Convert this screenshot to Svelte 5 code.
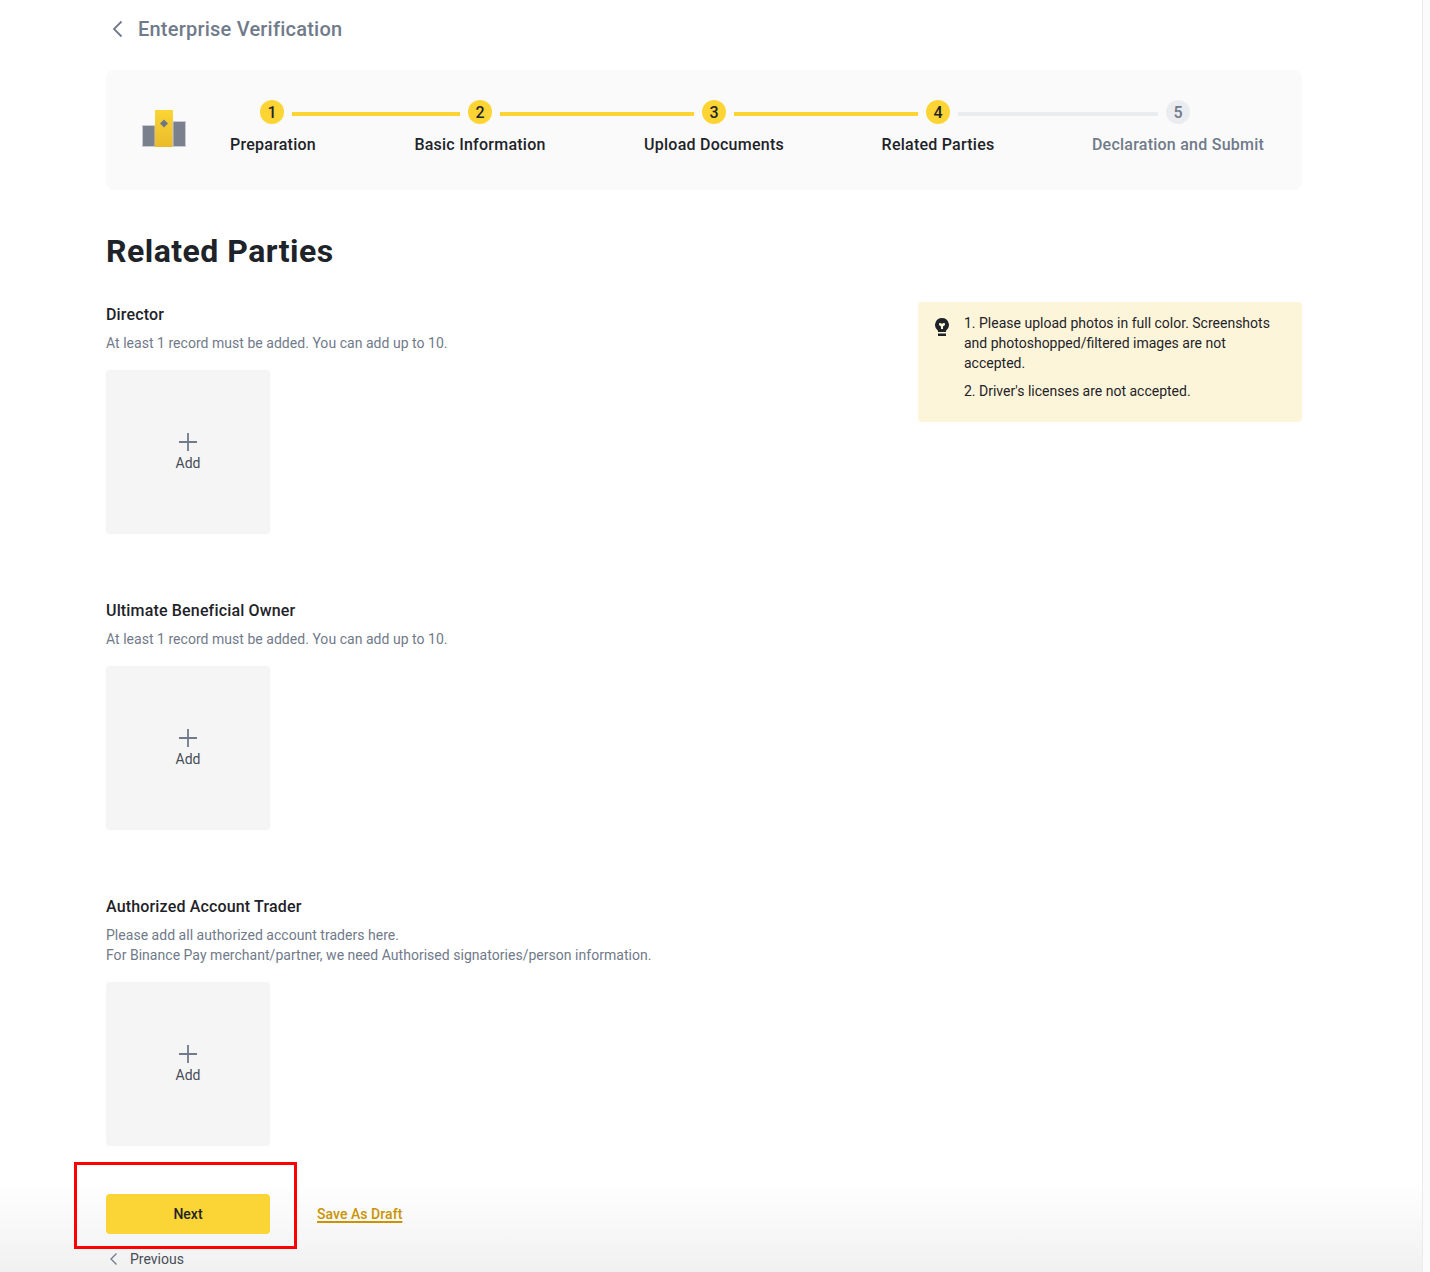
<script>
  const steps = [
    { n: 1, label: 'Preparation', line: 168, done: true },
    { n: 2, label: 'Basic Information', line: 194, done: true },
    { n: 3, label: 'Upload Documents', line: 184, done: true },
    { n: 4, label: 'Related Parties', line: 200, done: true },
    { n: 5, label: 'Declaration and Submit', line: 0, done: false }
  ];
  const sections = [
    { title: 'Director', desc: ['At least 1 record must be added. You can add up to 10.'] },
    { title: 'Ultimate Beneficial Owner', desc: ['At least 1 record must be added. You can add up to 10.'] },
    {
      title: 'Authorized Account Trader',
      desc: [
        'Please add all authorized account traders here.',
        'For Binance Pay merchant/partner, we need Authorised signatories/person information.'
      ]
    }
  ];
</script>

<div class="page">
  <div class="fade"></div>
  <main class="content">
    <header class="topbar">
      <svg class="back" width="24" height="24" viewBox="0 0 24 24" fill="none">
        <path d="M15.5 4.5 8 12l7.500 7.500" stroke="#707a8a" stroke-width="1.800" />
      </svg>
      <span>Enterprise Verification</span>
    </header>

    <section class="stepper">
      <svg class="logo" width="44" height="37" viewBox="0 0 44 37">
        <defs>
          <linearGradient id="gold" x1="0" y1="0" x2="0" y2="1">
            <stop offset="0" stop-color="#fcd535" />
            <stop offset="1" stop-color="#e9bb2a" />
          </linearGradient>
        </defs>
        <rect x="0.500" y="15.500" width="12.500" height="21" fill="#7a808e" stroke="#c9ccd2" stroke-width="1" />
        <rect x="13" y="0" width="18" height="37" fill="url(#gold)" />
        <rect x="31" y="11.500" width="12.500" height="25" fill="#7a808e" stroke="#c9ccd2" stroke-width="1" />
        <path d="M22 9.500l4 4-4 4-4-4z" fill="#6e7686" />
      </svg>
      <ol class="steps">
        {#each steps as s}
          <li class="step" class:todo={!s.done}>
            <span class="dot">{s.n}</span>
            {#if s.line}
              <span class="line" class:grey={s.n === 4} style="width:{s.line}px"></span>
            {/if}
            <span class="label">{s.label}</span>
          </li>
        {/each}
      </ol>
    </section>

    <h1>Related Parties</h1>

    <div class="columns">
      <div class="forms">
        {#each sections as sec}
          <section class="party">
            <h2>{sec.title}</h2>
            <p class="desc">
              {#each sec.desc as d}<span>{d}</span>{/each}
            </p>
            <button class="add" type="button">
              <svg width="20" height="20" viewBox="0 0 20 20" fill="none">
                <path d="M10 1v18M1 10h18" stroke="#707a8a" stroke-width="1.800" />
              </svg>
              <span class="add-text">Add</span>
            </button>
          </section>
        {/each}
      </div>

      <aside class="tip">
        <svg class="bulb" width="16" height="20" viewBox="0 0 16 20">
          <path fill-rule="evenodd" fill="#1e2329" d="M8 1a7 7 0 0 1 4 12.700V15H4v-1.300A7 7 0 0 1 8 1Zm-3 6.200c0 1.300 1.300 1.600 2 2.400V12h2V9.600c.7-.8 2-1.100 2-2.400C11 5.800 9 5.800 8 7 7 5.800 5 5.800 5 7.200Z" />
          <rect x="4" y="16.500" width="8" height="2.500" fill="#1e2329" />
        </svg>
        <div class="tip-text">
          <p>1. Please upload photos in full color. Screenshots and photoshopped/filtered images are not accepted.</p>
          <p>2. Driver's licenses are not accepted.</p>
        </div>
      </aside>
    </div>

    <div class="actions">
      <button class="next" type="button">Next</button>
      <a class="draft" href="#draft">Save As Draft</a>
    </div>
    <div class="previous">
      <svg width="16" height="16" viewBox="0 0 16 16" fill="none">
        <path d="M10.500 2.500 5 8l5.500 5.500" stroke="#707a8a" stroke-width="1.300" />
      </svg>
      <span>Previous</span>
    </div>
  </main>

  <div class="scrollbar"></div>
  <div class="annotation"></div>
</div>

<style>
  :global(body) {
    margin: 0;
    background: #fff;
  }
  .page {
    position: relative;
    height: 1272px;
    overflow: hidden;
    font-family: Roboto, "Noto Sans", "Liberation Sans", sans-serif;
    color: #1e2329;
  }
  .content {
    position: relative;
    width: 1196px;
    margin-left: 106px;
    display: flex;
    flex-direction: column;
  }
  .topbar {
    height: 58px;
    display: flex;
    align-items: center;
    gap: 8px;
    font-size: 20px;
    font-weight: 500;
    letter-spacing: 0.22px;
    color: #707a8a;
  }
  .back {
    flex: none;
  }
  .stepper {
    margin-top: 12px;
    height: 120px;
    box-sizing: border-box;
    background: #fafafa;
    border-radius: 8px;
    display: flex;
    align-items: flex-start;
    padding: 30px 0 0 36px;
  }
  .logo {
    flex: none;
    margin: 10px 43px 0 0;
  }
  .steps {
    list-style: none;
    margin: 0;
    padding: 0;
    display: grid;
    grid-template-columns: 86px 134px 138px 114px 170px;
    column-gap: 98px;
  }
  .step {
    position: relative;
    display: flex;
    flex-direction: column;
    align-items: center;
    gap: 11px;
  }
  .step:first-child .label {
    margin-left: 2px;
  }
  .dot {
    width: 24px;
    height: 24px;
    border-radius: 50%;
    background: #fcd535;
    font-size: 16px;
    font-weight: 500;
    line-height: 25px;
    text-align: center;
    color: #1e2329;
  }
  .todo .dot {
    background: #eaecef;
    color: #707a8a;
  }
  .line {
    position: absolute;
    left: calc(50% + 20px);
    top: 12px;
    height: 4px;
    background: #fcd535;
  }
  .line.grey {
    background: #eaecef;
  }
  .label {
    font-size: 16px;
    line-height: 20px;
    font-weight: 500;
    letter-spacing: 0.24px;
    white-space: nowrap;
  }
  .todo .label {
    color: #707a8a;
  }
  h1 {
    margin: 42px 0 0;
    font-size: 32px;
    line-height: 38px;
    font-weight: 700;
    letter-spacing: 0.47px;
    color: #1e2329;
  }
  .columns {
    display: flex;
    justify-content: space-between;
    align-items: flex-start;
    margin-top: 32px;
  }
  .tip {
    width: 384px;
    height: 120px;
    box-sizing: border-box;
    background: #fdf5d9;
    border-radius: 4px;
    display: flex;
    gap: 14px;
    padding: 11px 16px 0;
  }
  .bulb {
    flex: none;
    margin-top: 4px;
  }
  .tip-text {
    font-size: 14px;
    line-height: 20px;
    color: #1e2329;
  }
  .tip-text p {
    margin: 0 0 8px;
  }
  .party {
    height: 296px;
  }
  .party:last-child {
    height: 300px;
  }
  h2 {
    margin: 0;
    font-size: 16px;
    line-height: 26px;
    font-weight: 500;
    letter-spacing: 0.16px;
    color: #1e2329;
  }
  .desc {
    margin: 5px 0 0;
    font-size: 14px;
    line-height: 20px;
    letter-spacing: 0.03px;
    color: #707a8a;
  }
  .desc span {
    display: block;
  }
  .add {
    margin-top: 17px;
    width: 164px;
    height: 164px;
    border: 0;
    border-radius: 4px;
    background: #f5f5f5;
    display: flex;
    flex-direction: column;
    align-items: center;
    justify-content: center;
    font: inherit;
    font-size: 14px;
    line-height: 20px;
    color: #474d57;
    padding: 1px 0 0;
  }
  .add-text {
    margin-top: 1px;
  }
  .actions {
    display: flex;
    align-items: center;
    gap: 47px;
  }
  .next {
    width: 164px;
    height: 40px;
    border: 0;
    border-radius: 4px;
    background: #fbd435;
    font: inherit;
    font-size: 14px;
    font-weight: 500;
    color: #1e2329;
  }
  .draft {
    font-size: 14px;
    font-weight: 500;
    letter-spacing: 0.05px;
    color: #c99400;
    text-decoration: underline;
    text-decoration-thickness: 2px;
    text-underline-offset: 2px;
  }
  .previous {
    margin-top: 15px;
    display: flex;
    align-items: center;
    gap: 8px;
    font-size: 14px;
    line-height: 20px;
    color: #474d57;
  }
  .fade {
    position: absolute;
    left: 0;
    right: 0;
    bottom: 0;
    height: 90px;
    background: linear-gradient(rgba(238, 238, 238, 0), rgba(238, 238, 238, 0.85));
  }
  .scrollbar {
    position: absolute;
    top: 0;
    right: 0;
    bottom: 0;
    width: 7px;
    background: #fbfbfb;
    border-left: 1px solid #ececec;
  }
  .annotation {
    position: absolute;
    left: 74px;
    top: 1162px;
    width: 223px;
    height: 87px;
    box-sizing: border-box;
    border: 3px solid #ff0000;
  }
</style>
